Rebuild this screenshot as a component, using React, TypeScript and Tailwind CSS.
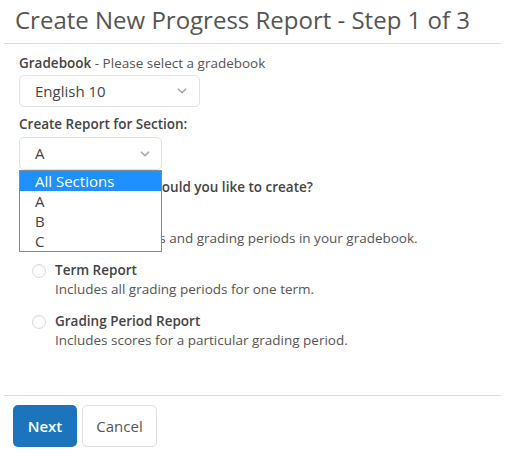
import { ChevronDown } from "lucide-react";

const Radio = () => (
  <span className="mt-[3px] h-[14px] w-[14px] shrink-0 rounded-full border border-[#dcdcdc] bg-white shadow-[inset_0_1px_1px_rgba(0,0,0,0.05)]" />
);

const Option = ({ title, desc }: { title: string; desc: string }) => (
  <div className="flex gap-[9px] pl-[13px]">
    <Radio />
    <div className="leading-[19px]">
      <div className="font-semibold text-[13.5px] text-[#444]">{title}</div>
      <div className="text-[13.5px] text-[#555]">{desc}</div>
    </div>
  </div>
);

export default function App() {
  return (
    <div
      className="w-[505px] h-[455px] bg-white text-[#555] overflow-hidden"
      style={{ fontFamily: '"Open Sans", sans-serif' }}
    >
      {/* HEADER */}
      <div className="px-[15px] pt-[3px] h-[44px] border-b border-[#ddd] mx-[4px]">
        <h1 className="text-[24px] leading-[34px] text-[#555] -ml-[4px]">
          Create New Progress Report - Step 1 of 3
        </h1>
      </div>

      {/* BODY */}
      <div className="relative pl-[19px] pt-[9px] h-[351px]">
        <div className="text-[13.5px] leading-[20px]">
          <span className="font-semibold text-[#444]">Gradebook</span> - Please select a gradebook
        </div>
        <div className="mt-[2px] flex h-[32px] w-[181px] items-center justify-between rounded-[5px] border border-[#e2e2e2] pl-[15px] pr-[10px] text-[15px] text-[#444]">
          English 10
          <ChevronDown className="h-[14px] w-[14px] text-[#aaa]" strokeWidth={3} />
        </div>

        <div className="mt-[7px] text-[13.5px] leading-[20px] font-semibold text-[#444]">
          Create Report for Section:
        </div>
        <div className="mt-[3px] flex h-[33px] w-[143px] items-center justify-between rounded-[5px] border border-[#e2e2e2] pl-[15px] pr-[9px] text-[15px] text-[#444]">
          A
          <ChevronDown className="h-[14px] w-[14px] text-[#aaa]" strokeWidth={3} />
        </div>

        <div className="mt-[7px] text-[13.5px] leading-[20px] font-semibold text-[#444]">
          What type of report would you like to create?
        </div>

        <div className="mt-[13px] flex flex-col gap-[13px]">
          <Option
            title="Full Report"
            desc="Includes all terms and grading periods in your gradebook."
          />
          <Option title="Term Report" desc="Includes all grading periods for one term." />
          <Option
            title="Grading Period Report"
            desc="Includes scores for a particular grading period."
          />
        </div>

        {/* DROPDOWN LIST */}
        <div className="absolute left-[19px] top-[126px] w-[143px] border border-[#7f8c99] bg-white text-[15px] leading-[20px] text-[#444]">
          <div className="bg-[#1e90ff] pl-[15px] text-white">All Sections</div>
          <div className="pl-[15px]">A</div>
          <div className="pl-[15px]">B</div>
          <div className="pl-[15px]">C</div>
        </div>
      </div>

      {/* FOOTER */}
      <div className="mx-[4px] border-t border-[#ddd] pl-[9px] pt-[9px] flex gap-[5px]">
        <button className="h-[42px] w-[64px] rounded-[5px] bg-[#1c75bc] text-[15px] font-semibold text-white">
          Next
        </button>
        <button className="h-[42px] w-[75px] rounded-[5px] border border-[#e0e0e0] bg-white text-[15px] text-[#555]">
          Cancel
        </button>
      </div>
    </div>
  );
}
